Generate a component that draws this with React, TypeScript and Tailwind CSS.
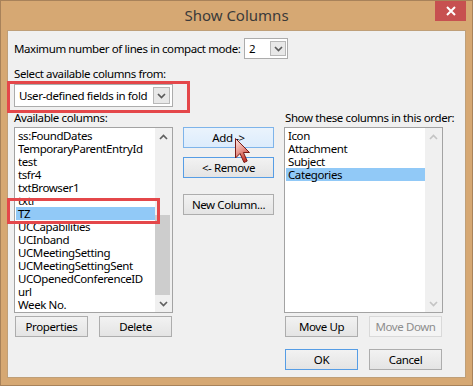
import type { FC, ReactNode } from "react";

const availableColumns = [
	"ss:FoundDates",
	"TemporaryParentEntryId",
	"test",
	"tsfr4",
	"txtBrowser1",
	"txtr",
	"TZ",
	"UCCapabilities",
	"UCInband",
	"UCMeetingSetting",
	"UCMeetingSettingSent",
	"UCOpenedConferenceID",
	"url",
	"Week No.",
];

const shownColumns = ["Icon", "Attachment", "Subject", "Categories"];

type Tone = "normal" | "hover" | "focus" | "default" | "disabled";

const toneClass: Record<Tone, string> = {
	normal: "border-[#adadad] from-[#f2f2f2] to-[#e4e4e4] text-black",
	hover: "border-[#7eb4ea] from-[#eaf3fc] to-[#dcecfc] text-black",
	focus: "border-[#569de5] from-[#f2f2f2] to-[#e4e4e4] text-black",
	default: "border-[#569de5] from-[#f2f2f2] to-[#e4e4e4] text-black",
	disabled: "border-[#d9d9d9] from-[#f4f4f4] to-[#f4f4f4] text-[#8d8d8d]",
};

const Chevron: FC<{ up?: boolean; color: string }> = ({ up, color }) => (
	<svg width="9" height="6" viewBox="0 0 9 6">
		<path
			d={up ? "M1 5 L4.5 1.5 L8 5" : "M1 1 L4.5 4.5 L8 1"}
			stroke={color}
			strokeWidth="1.7"
			fill="none"
		/>
	</svg>
);

const WinButton: FC<{ children: ReactNode; tone?: Tone; className?: string }> = ({
	children,
	tone = "normal",
	className = "",
}) => (
	<div
		className={`flex h-[21px] items-center justify-center whitespace-nowrap border bg-linear-to-b ${toneClass[tone]} ${className}`}
	>
		{children}
	</div>
);

const ScrollBar: FC<{ enabled: boolean }> = ({ enabled }) => {
	const arrow = enabled ? "#606060" : "#c4c4c4";
	return (
		<div className="flex w-[17px] flex-col bg-[#f0f0f0]">
			<div className="flex h-[17px] items-center justify-center">
				<Chevron up color={arrow} />
			</div>
			<div className="flex flex-1 flex-col">
				{enabled ? (
					<>
						<div className="h-[70px]" />
						<div className="mr-[2px] h-[80px] bg-[#cdcdcd]" />
					</>
				) : null}
			</div>
			<div className="flex h-[17px] items-center justify-center">
				<Chevron color={arrow} />
			</div>
		</div>
	);
};

const ListBox: FC<{ items: string[]; selected: string; scrollable: boolean }> = ({
	items,
	selected,
	scrollable,
}) => (
	<div className="mt-[2px] flex h-[186px] border border-[#a3a3a3] bg-white">
		<div className="min-w-0 flex-1 overflow-hidden pl-[1px] pt-[1px]">
			{items.map((item) => (
				<div
					key={item}
					className={`h-[13px] whitespace-nowrap pl-[2px] leading-[13px] ${
						item === selected ? "bg-[#91c9f7]" : ""
					}`}
				>
					{item}
				</div>
			))}
		</div>
		<ScrollBar enabled={scrollable} />
	</div>
);

const Cursor = () => (
	<svg
		className="absolute left-[233px] top-[136px]"
		width="17"
		height="28"
		viewBox="0 0 17 28"
	>
		<defs>
			<linearGradient id="cur" x1="0" y1="0" x2="0.4" y2="1">
				<stop offset="0" stopColor="#fbe9e6" />
				<stop offset="0.55" stopColor="#e89a90" />
				<stop offset="1" stopColor="#c8372c" />
			</linearGradient>
		</defs>
		<path
			d="M1.5 1.5 L1.5 21 L6 16.5 L10 25.5 L13.2 24 L9.4 15.5 L15.5 15.5 Z"
			fill="url(#cur)"
			stroke="#7a1b16"
			strokeWidth="1"
			strokeLinejoin="round"
		/>
	</svg>
);

export default function App() {
	return (
		<div className="relative h-[386px] w-[473px] border border-[#a8825a] bg-[#d6a873] font-['Noto_Sans',sans-serif] text-[11.5px] tracking-[-0.4px] text-black">
			<div className="flex h-[29px] items-center justify-center">
				<span className="text-[15px] tracking-normal text-[#3a3a3a]">Show Columns</span>
			</div>
			<div className="absolute right-[6px] top-0 flex h-[20px] w-[31px] items-center justify-center bg-[#c75050]">
				<svg width="10" height="10" viewBox="0 0 10 10">
					<path d="M1 1 L9 9 M9 1 L1 9" stroke="#fff" strokeWidth="2" />
				</svg>
			</div>

			<div className="mx-[6px] h-[348px] border border-[#bf9f78] bg-[#f0f0f0] pl-[6px] pt-[7px]">
				<div className="flex h-[21px] items-center">
					<span className="w-[230px] whitespace-nowrap leading-[15px]">
						Maximum number of lines in compact mode:
					</span>
					<div className="flex h-[21px] w-[44px] items-center border border-[#acacac] bg-white pl-[4px] pr-[1px]">
						<span className="flex-1">2</span>
						<div className="flex h-[15px] w-[16px] items-center justify-center border border-[#b8b8b8] bg-[#e8e8e8]">
							<Chevron color="#5a5a5a" />
						</div>
					</div>
				</div>

				<p className="mt-[7px] leading-[15px]">Select available columns from:</p>

				<div className="relative mt-[3px] w-[159px]">
					<div className="flex h-[23px] items-center border border-[#acacac] bg-white pl-[4px] pr-[2px]">
						<span className="flex-1 overflow-hidden whitespace-nowrap">User-defined fields in fold</span>
						<div className="flex h-[17px] w-[17px] shrink-0 items-center justify-center border border-[#b8b8b8] bg-[#e8e8e8]">
							<Chevron color="#5a5a5a" />
						</div>
					</div>
					<div className="absolute -left-[7px] -top-[3px] h-[32px] w-[183px] border-[3px] border-[#e4474a]" />
				</div>

				<div className="mt-[3px] flex">
					<div className="relative w-[159px]">
						<p className="h-[15px] leading-[15px]">Available columns:</p>
						<ListBox items={availableColumns} selected="TZ" scrollable />
						<div className="mt-[3px] flex gap-[11px] pl-[1px]">
							<WinButton className="w-[73px]">Properties</WinButton>
							<WinButton className="w-[73px]">Delete</WinButton>
						</div>
						<div className="absolute -left-[7px] top-[88px] h-[26px] w-[153px] border-[3px] border-[#e4474a]" />
					</div>

					<div className="ml-[10px] w-[91px] pt-[17px]">
						<WinButton tone="hover">Add -&gt;</WinButton>
						<WinButton tone="focus" className="mt-[9px]">
							&lt;- Remove
						</WinButton>
						<WinButton className="mt-[16px]">New Column...</WinButton>
					</div>

					<div className="ml-[10px] w-[159px]">
						<p className="h-[15px] whitespace-nowrap pl-[1px] leading-[15px]">
							Show these columns in this order:
						</p>
						<ListBox items={shownColumns} selected="Categories" scrollable={false} />
						<div className="mt-[3px] flex gap-[11px] pl-[1px]">
							<WinButton className="w-[73px]">Move Up</WinButton>
							<WinButton tone="disabled" className="w-[73px]">
								Move Down
							</WinButton>
						</div>
						<div className="mt-[12px] flex gap-[11px] pl-[1px]">
							<WinButton tone="default" className="w-[73px]">
								OK
							</WinButton>
							<WinButton className="w-[73px]">Cancel</WinButton>
						</div>
					</div>
				</div>
			</div>
			<Cursor />
		</div>
	);
}
